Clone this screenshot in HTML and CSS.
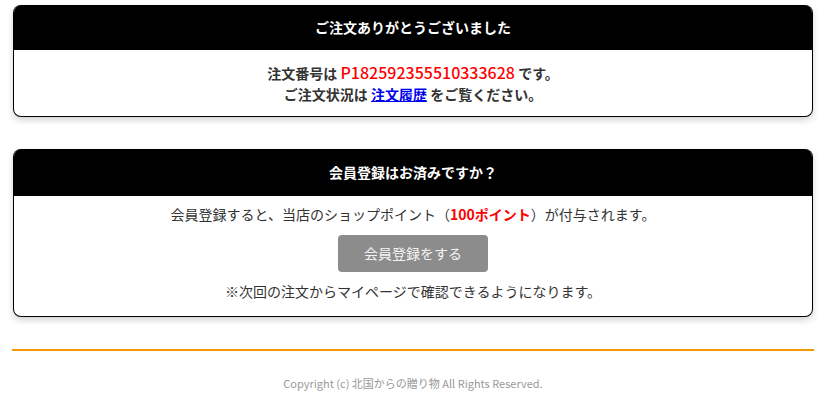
FILE: index.html
```html
<!DOCTYPE html>
<html lang="ja">
<head>
  <meta charset="utf-8">
  <title>ご注文ありがとうございました</title>
  <link rel="stylesheet" href="styles.css">
</head>
<body>
  <div class="page">
    <!-- 注文完了 -->
    <div class="box box-thanks">
      <h2 class="box-title">ご注文ありがとうございました</h2>
      <div class="box-body">
        <p>注文番号は <span class="order-no">P182592355510333628</span> です。</p>
        <p>ご注文状況は <a href="#" class="history-link">注文履歴</a> をご覧ください。</p>
      </div>
    </div>

    <!-- 会員登録 -->
    <div class="box box-member">
      <h2 class="box-title">会員登録はお済みですか？</h2>
      <div class="box-body">
        <p>会員登録すると、当店のショップポイント（<span class="point">100ポイント</span>）が付与されます。</p>
        <a href="#" class="btn-entry">会員登録をする</a>
        <p>※次回の注文からマイページで確認できるようになります。</p>
      </div>
    </div>

    <div class="footer">
      <p>Copyright (c) 北国からの贈り物 All Rights Reserved.</p>
    </div>
  </div>
</body>
</html>
```

FILE: styles.css
```css
body {
  margin: 0;
  background: #fff;
  color: #333;
  font-family: "Noto Sans CJK JP", "Noto Sans", sans-serif;
  font-size: 14px;
}

.page {
  width: 802px;
  margin: 0 12px;
  padding-top: 5px;
}

.box {
  margin: 0 1px 32px 1px;
  border: 1px solid #000;
  border-top: none;
  border-radius: 8px;
  overflow: hidden;
  box-shadow: 0 3px 6px rgba(0,0,0,0.18);
  background: white;
  text-align: center;
}

.box-title {
  margin: 0;
  background: #000;
  color: #fff;
  font-size: 14px;
  font-weight: bold;
  height: 45px;
  line-height: 45px;
}

.box-member .box-title {
  height: 47px;
  line-height: 46px;
}

.box-body {
  padding: 12px 10px 11px;
}

.box-body p {
  margin: 0;
  line-height: 21px;
}

.box-thanks .box-body {
  font-weight: bold;
}

.order-no {
  color: #f00;
  font-size: 16px;
  font-weight: 500;
}

.history-link {
  color: #00e;
  text-decoration: underline;
}

.box-member .box-body {
  padding: 8px 10px 14px;
}

.point {
  color: #f00;
  font-weight: bold;
}

.btn-entry {
  display: block;
  width: 150px;
  height: 37px;
  line-height: 37px;
  margin: 10px auto 9px;
  background: #8c8c8c;
  color: #f4f4f4;
  border-radius: 4px;
  text-decoration: none;
  font-size: 14px;
}

.footer {
  border-top: 2px solid #f39800;
  text-align: center;
}

.footer p {
  margin: 0;
  padding-top: 24px;
  font-size: 11px;
  line-height: 16px;
  color: #999;
}
```
